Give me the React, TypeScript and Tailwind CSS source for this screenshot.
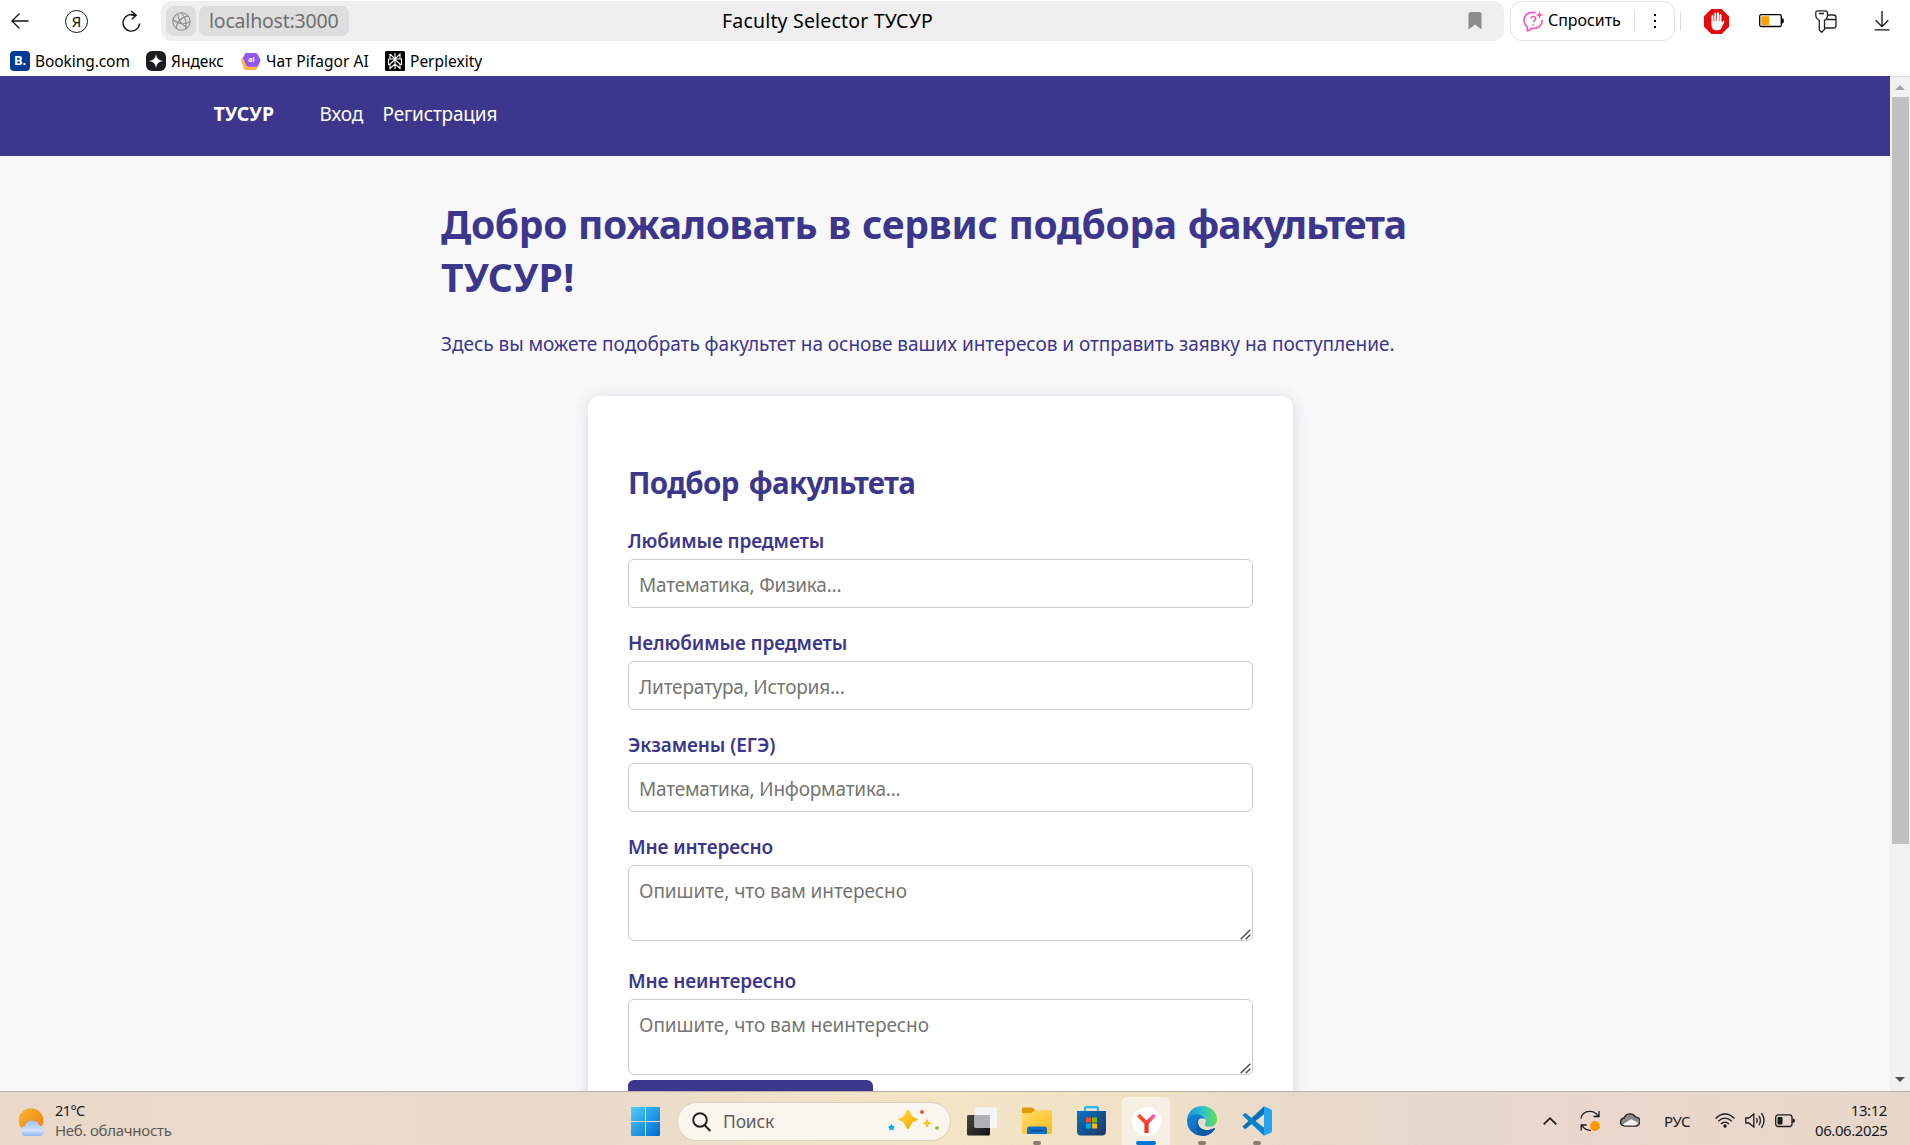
import type { ReactNode } from 'react';

function BackIcon() {
  return (
    <svg width="18" height="18" viewBox="0 0 18 18" fill="none" stroke="#111" strokeWidth="1.3">
      <path d="M17.5 9H1M8.5 1.5 1 9l7.5 7.5" />
    </svg>
  );
}

function YaIcon() {
  return (
    <span className="flex h-[23px] w-[23px] items-center justify-center rounded-full border-[1.5px] border-[#111] font-['Noto_Sans',sans-serif] text-[15px] leading-none text-[#111]">
      Я
    </span>
  );
}

function ReloadIcon() {
  return (
    <svg width="19" height="23" viewBox="0 0 19 23" fill="none" stroke="#111" strokeWidth="1.4">
      <path d="M17.6 13.5A8.3 8.3 0 1 1 13.5 5.6" />
      <path d="M9 5h5.500M9.200 1l5 4.200-4.400 4" />
    </svg>
  );
}

function GlobeIcon() {
  return (
    <svg width="19" height="19" viewBox="0 0 19 19" fill="none" stroke="#8f8f8f" strokeWidth="1.1">
      <circle cx="9.500" cy="9.500" r="8.700" />
      <path d="M5.500 1.800C6.500 8 10.500 13.500 15.500 15.800M16.200 4C10 4.500 4.500 10 4.300 16.500M.9 7.500c5 4.500 11.500 5.200 17.200 2.300M9 .9c4.500 4 6 9.500 4.500 16.400" />
    </svg>
  );
}

function BookmarkIcon() {
  return (
    <svg width="14" height="18" viewBox="0 0 14 18">
      <path d="M.5 2.500Q.5 0 3 0h8q2.500 0 2.500 2.500V17.500L7 12.500.5 17.500z" fill="#8c8c8c" />
    </svg>
  );
}

function AskIcon() {
  return (
    <svg width="21" height="21" viewBox="0 0 21 21" fill="none">
      <defs>
        <linearGradient id="ask" x1="0" y1="0" x2="1" y2="0">
          <stop offset="0" stopColor="#e65be0" />
          <stop offset="1" stopColor="#ff5c93" />
        </linearGradient>
      </defs>
      <path d="M12 1.600C5.500.2 1 4.300 1 9.300c0 3 1.300 5.300 3.400 6.800L4.300 20c2-.4 3.500-1.500 4.600-2.600 5.500.5 10-2.400 10.300-7.700" stroke="url(#ask)" strokeWidth="1.700" strokeLinecap="round" strokeLinejoin="round" />
      <path d="M8 7.600c0-3 5-2.700 4.700.2-.2 1.700-2.300 1.700-2.300 3.600M10.300 13v1.500" stroke="url(#ask)" strokeWidth="1.600" />
      <path d="M16.500 0l1 3 3.200 1-3.200 1-1 3-1-3-3-1 3-1z" fill="#ff5c93" />
    </svg>
  );
}

function AdblockIcon() {
  return (
    <svg width="25" height="25" viewBox="0 0 25 25">
      <path d="M7.300 0h10.400L25 7.300v10.400L17.700 25H7.300L0 17.700V7.300z" fill="#e60b0b" />
      <g stroke="#fff" strokeWidth="2" strokeLinecap="round">
        <path d="M8.500 7v7M11.300 4.700v9M14 4.300v9M16.500 6.300v8" />
      </g>
      <path d="M7.500 12h10v2.300l1.300-2.100c.7-1 2-.4 1.500.7l-3 6.300c-.8 1.500-2 2-4.300 2-3.500 0-5.500-1.500-5.500-5.500z" fill="#fff" />
    </svg>
  );
}

function BrowserBatteryIcon() {
  return (
    <svg width="25" height="14" viewBox="0 0 25 14">
      <rect x=".7" y=".7" width="21.600" height="11.800" rx="1.500" fill="none" stroke="#000" strokeWidth="1.300" />
      <rect x="2.200" y="2.200" width="8" height="9" rx="1" fill="#ffa000" />
      <path d="M22.500 3.700q2.500.3 2.500 3t-2.500 3z" fill="#000" />
    </svg>
  );
}

function KeysIcon() {
  return (
    <svg width="22" height="23" viewBox="0 0 22 23" fill="none" stroke="#222" strokeWidth="1.300">
      <path d="M2.500.8h7.700q2.300 0 2.300 2.400v2.600q0 3.400-3 4.500v9.200L6.700 22.300 4.300 20v-9.700Q.8 8.800.8 5.300V2.800Q.8.800 2.500.8z" />
      <path d="M4 3.500h5M13 5h5.500q2.500 0 2.500 2.500v8q0 2.500-2.500 2.500h-9M11.500 9.500H21" />
    </svg>
  );
}

function DownloadIcon() {
  return (
    <svg width="16" height="20" viewBox="0 0 16 20" fill="none" stroke="#111" strokeWidth="1.300">
      <path d="M8 0v15.500M1.700 9.300 8 15.600l6.300-6.300M.5 18.800h15" />
    </svg>
  );
}

function Toolbar() {
  return (
    <div className="flex h-[41px] items-start pt-px pl-[11px]">
      <div className="flex h-[40px] items-center">
        <BackIcon />
        <div className="ml-[36px]"><YaIcon /></div>
        <div className="ml-[34px] mr-[20px]"><ReloadIcon /></div>
      </div>
      <div className="flex h-10 w-[1343px] shrink-0 items-center rounded-[10px] bg-[#efefef]">
        <div className="ml-[5px] flex h-[30px] w-[30px] items-center justify-center rounded-[7px] bg-[#dedede]">
          <GlobeIcon />
        </div>
        <div className="ml-[3px] flex h-[30px] w-[150px] items-center rounded-[7px] bg-[#dedede] pl-[10px] text-[19.5px] tracking-[-0.2px] text-[#6f6f6f]">
          localhost:3000
        </div>
        <div className="ml-[373px] flex-1 text-[19.5px] leading-[30px] tracking-[0.18px] text-black">Faculty Selector ТУСУР</div>
        <div className="mr-[22px]"><BookmarkIcon /></div>
      </div>
      <div className="ml-[6px] flex h-10 w-[165px] shrink-0 items-center rounded-[12px] border border-[#e3e3e3]">
        <div className="ml-3"><AskIcon /></div>
        <span className="ml-[4px] w-[86px] pb-px text-[16px] leading-[29px] tracking-[-0.05px] text-black">Спросить</span>
        <span className="h-[22px] w-px bg-[#dedede]" />
        <span className="ml-[19px] flex flex-col gap-1">
          <i className="h-[2px] w-[2px] bg-black" />
          <i className="h-[2px] w-[2px] bg-black" />
          <i className="h-[2px] w-[2px] bg-black" />
        </span>
      </div>
      <div className="flex h-10 items-center">
        <span className="ml-[5px] h-[20px] w-px bg-[#dedede]" />
        <div className="ml-[23px]"><AdblockIcon /></div>
        <div className="ml-[30px]"><BrowserBatteryIcon /></div>
        <div className="ml-[31px]"><KeysIcon /></div>
        <div className="ml-[37px]"><DownloadIcon /></div>
      </div>
    </div>
  );
}

function Bookmark({ icon, children, className }: { icon: ReactNode; children: ReactNode; className: string }) {
  return (
    <div className={`flex shrink-0 items-center gap-[5px] ${className}`}>
      {icon}
      <span className="whitespace-nowrap text-[15.5px] leading-5 text-black">{children}</span>
    </div>
  );
}

function Bookmarks() {
  return (
    <div className="flex h-[35px] items-center pt-[5px] pl-[10px]">
      <Bookmark
        className="w-[136px] tracking-[-0.08px]"
        icon={<span className="flex h-5 w-5 items-center justify-center rounded-[4px] bg-[#003b95] text-[13px] font-bold text-white">B.</span>}
      >
        Booking.com
      </Bookmark>
      <Bookmark
        className="w-[95px]"
        icon={
          <svg width="20" height="20" viewBox="0 0 20 20">
            <rect width="20" height="20" rx="6" fill="#1d1d1f" />
            <path d="M10 3q.6 6.400 7 7-6.400.6-7 7-.6-6.400-7-7 6.400-.6 7-7z" fill="#fff" />
          </svg>
        }
      >
        Яндекс
      </Bookmark>
      <Bookmark
        className="w-[144px] tracking-[0.05px]"
        icon={
          <svg width="20" height="18" viewBox="0 0 20 18">
            <path d="M2 4.500 0 8l2.300 7.500Q3 18 5 18h9q1.300 0 2-1.500l1-2.500z" fill="#ffb54d" />
            <path d="M4.500 1h10Q16.300 1 17 2.700l2.300 4.800q.4 1-.1 2l-1.900 4q-.5 1.200-2 1.200H7.700q-1.700 0-2.400-1.500L2 6z" fill="#9059ee" />
            <text x="7.300" y="10.300" fontSize="7" fontWeight="700" fill="#fff">ai</text>
          </svg>
        }
      >
        Чат Pifagor AI
      </Bookmark>
      <Bookmark
        className=""
        icon={
          <svg width="20" height="20" viewBox="0 0 20 20">
            <rect width="20" height="20" rx="1.500" fill="#000" />
            <path d="M10 2v16M5 3l5 5 5-5v5M5 3v5M3.500 8h13v5.500H15M3.500 8v5.500H5M10 8.500l-5 4.500v4.500l5-4.500 5 4.500V13z" fill="none" stroke="#fff" strokeWidth="1.100" />
          </svg>
        }
      >
        Perplexity
      </Bookmark>
    </div>
  );
}

const fieldClass =
  'block w-full rounded-[6px] border border-[#ccc] bg-white px-[10px] text-[19px] leading-[28px] text-black outline-none placeholder:text-[#757575]';

function Field({ label, placeholder, area }: { label: string; placeholder: string; area?: boolean }) {
  return (
    <label className="block">
      <span className="mb-1 block text-[19px] leading-[28px] font-semibold tracking-[-0.1px] text-[#3c378c]">{label}</span>
      {area ? (
        <span className="relative mb-[26px] block">
          <textarea className={`${fieldClass} h-[76px] resize-none pt-[11px] tracking-[-0.06px]`} placeholder={placeholder} />
          <svg className="absolute right-[2px] bottom-[1px]" width="11" height="11" viewBox="0 0 11 11" stroke="#505050" strokeWidth="1.500">
            <path d="M.7 10.300 10.300.7M5.700 10.300l4.600-4.600" />
          </svg>
        </span>
      ) : (
        <input className={`${fieldClass} mb-[21px] h-[49px] pt-[3px] tracking-[-0.2px]`} placeholder={placeholder} />
      )}
    </label>
  );
}

function Page() {
  return (
    <div className="flex min-h-0 flex-1">
      <div className="flex w-[1890px] flex-col overflow-hidden bg-[#f8f8f8] text-[#3c378c]">
        <nav className="flex h-20 shrink-0 bg-[#3c378c] pt-[23px] pl-[213.500px] text-[19px] leading-[30px] text-white">
          <b className="w-[106px] text-[19.5px] tracking-[0.05px]">ТУСУР</b>
          <span className="w-[63px] tracking-[-0.1px]">Вход</span>
          <span className="tracking-[-0.17px]">Регистрация</span>
        </nav>
        <main className="mx-auto w-[1010px] shrink-0 pt-[41px]">
          <h1 className="pl-px text-[39px] leading-[53px] font-bold tracking-[-0.34px] [word-spacing:1.2px]">
            Добро пожаловать в сервис подбора <span className="tracking-[-1.05px]">факультета</span>{' '}
            <span className="tracking-[0.3px]">ТУСУР!</span>
          </h1>
          <p className="mt-[26px] pl-px text-[19px] leading-[30px] tracking-[-0.03px] whitespace-nowrap">
            Здесь вы можете подобрать факультет на основе ваших интересов и отправить заявку на поступление.
          </p>
          <section className="mt-[37px] ml-[148px] h-[900px] w-[705px] rounded-[12px] bg-white px-10 pt-[67px] shadow-[0_2px_16px_rgba(61,54,139,0.16)]">
            <h2 className="mb-[24px] text-[29.5px] leading-[40px] font-bold tracking-[-0.66px] [word-spacing:3px]">Подбор факультета</h2>
            <Field label="Любимые предметы" placeholder="Математика, Физика..." />
            <Field label="Нелюбимые предметы" placeholder="Литература, История..." />
            <Field label="Экзамены (ЕГЭ)" placeholder="Математика, Информатика..." />
            <Field label="Мне интересно" placeholder="Опишите, что вам интересно" area />
            <Field label="Мне неинтересно" placeholder="Опишите, что вам неинтересно" area />
            <button aria-label="Подобрать" className="-mt-[21px] block h-[50px] w-[245px] rounded-[6px] bg-[#3c378c]" />
          </section>
        </main>
      </div>
      <div className="flex w-5 flex-col items-center border-t border-[#dcdcdc] bg-[#f1f1f1]">
        <svg className="mt-2 shrink-0" width="10" height="5" viewBox="0 0 10 5"><path d="M0 5 5 0l5 5z" fill="#a3a3a3" /></svg>
        <div className="mt-[7px] ml-px h-[747px] w-[17px] bg-[#c1c1c1]" />
        <svg className="mt-auto mb-[9px] shrink-0" width="10" height="5" viewBox="0 0 10 5"><path d="m0 0 5 5 5-5z" fill="#505050" /></svg>
      </div>
    </div>
  );
}

function WeatherIcon() {
  return (
    <svg width="28" height="28" viewBox="0 0 28 28">
      <defs>
        <linearGradient id="sun" x1="0" y1="0" x2="1" y2="1">
          <stop offset="0" stopColor="#f5b92e" />
          <stop offset="1" stopColor="#f27a12" />
        </linearGradient>
        <linearGradient id="cloud" x1="0" y1="0" x2="0" y2="1">
          <stop offset="0" stopColor="#9fc0f3" />
          <stop offset=".65" stopColor="#d3e2fb" />
          <stop offset="1" stopColor="#8fb0ee" />
        </linearGradient>
      </defs>
      <circle cx="13" cy="12.500" r="12.300" fill="url(#sun)" />
      <path d="M7.500 28a5 5 0 0 1-.6-9.900 7.500 7.500 0 0 1 14.200-.8A5.500 5.500 0 0 1 22.500 28z" fill="url(#cloud)" />
    </svg>
  );
}

function WindowsIcon() {
  return (
    <svg width="29" height="29" viewBox="0 0 29 29">
      <defs>
        <linearGradient id="win" x1="0" y1="0" x2="1" y2="1">
          <stop offset="0" stopColor="#4fd0fa" />
          <stop offset="1" stopColor="#0069ce" />
        </linearGradient>
      </defs>
      <path d="M1 0h13v14H0V1q0-1 1-1zM15 0h13q1 0 1 1v13H15zM0 15h14v14H1q-1 0-1-1zM15 15h14v13q0 1-1 1H15z" fill="url(#win)" />
    </svg>
  );
}

function SparklesIcon() {
  return (
    <svg width="52" height="24" viewBox="0 0 52 24">
      <defs>
        <linearGradient id="spark" x1="0" y1="0" x2="1" y2="1">
          <stop offset="0" stopColor="#ffdc3d" />
          <stop offset="1" stopColor="#f0a500" />
        </linearGradient>
      </defs>
      <path d="M20 0q1.500 0 2 1.800 1.300 5.200 6.300 6.500 3 1.100 0 2.200-5 1.300-6.300 6.500-.5 2-2 2t-2-2q-1.300-5.200-6.300-6.500-3-1.100 0-2.200 5-1.300 6.300-6.500Q18.500 0 20 0z" fill="url(#spark)" />
      <path d="m39 8.500 1.400 3.300 3.600 1.400-3.600 1.400L39 18l-1.400-3.400-3.600-1.400 3.600-1.400z" fill="url(#spark)" />
      <path d="m3.500 14 1.100 1.800 2.200.4-1.300 1.700.3 2.300-2.100-.8-2 1.300-.1-2.300L0 16.700l2.100-.6z" fill="#0ca8ee" />
      <circle cx="34" cy="2" r="2" fill="#ea5a32" />
      <circle cx="49" cy="18" r="1.900" fill="#8bc83f" />
    </svg>
  );
}

function TaskViewIcon() {
  return (
    <svg width="30" height="29" viewBox="0 0 30 29">
      <defs>
        <linearGradient id="tv" x1="0" y1="0" x2="1" y2="1">
          <stop offset="0" stopColor="#484848" />
          <stop offset="1" stopColor="#111" />
        </linearGradient>
      </defs>
      <rect y="8" width="23" height="20.500" rx="1.500" fill="url(#tv)" />
      <rect x="7.500" y=".5" width="22.500" height="20.500" rx="1.500" fill="#f5f5f8" />
      <path d="M7.500 8H22q1 0 1 1v12H9q-1.500 0-1.500-1.500z" fill="#b1b1b3" />
    </svg>
  );
}

function ExplorerIcon() {
  return (
    <svg width="30" height="28" viewBox="0 0 30 28">
      <defs>
        <linearGradient id="fold" x1="0" y1="0" x2="1" y2="1">
          <stop offset="0" stopColor="#ffdc6b" />
          <stop offset="1" stopColor="#fcbb1c" />
        </linearGradient>
      </defs>
      <path d="M0 2Q0 .5 1.500.5h8.200q1 0 1.700.8L14 4v5H0z" fill="#dd9b05" />
      <path d="M0 6h9.500l3-2.700H28.500q1.500 0 1.500 1.500V25q0 2-2 2H2q-2 0-2-2z" fill="url(#fold)" />
      <path d="M5 27v-5q0-2.500 2.500-2.500h15Q25 19.500 25 22v5z" fill="#0f6fc5" />
      <path d="M9 23.500h12" stroke="#07498f" strokeWidth="1.300" />
    </svg>
  );
}

function StoreIcon() {
  return (
    <svg width="29" height="30" viewBox="0 0 29 30">
      <defs>
        <linearGradient id="store" x1="0" y1="0" x2="1" y2="1">
          <stop offset="0" stopColor="#0873c4" />
          <stop offset="1" stopColor="#213461" />
        </linearGradient>
      </defs>
      <path d="M8 7V2.500Q8 1.200 9.300 1.200h10.400Q21 1.200 21 2.500V7" fill="none" stroke="#22b7ee" strokeWidth="2.200" />
      <path d="M0 5h29v20.500q0 4-4 4H4q-4 0-4-4z" fill="url(#store)" />
      <path d="M9 11.500h5v5H9z" fill="#f25022" />
      <path d="M15 11.500h5v5h-5z" fill="#7fba00" />
      <path d="M9 17.500h5v5H9z" fill="#00a4ef" />
      <path d="M15 17.500h5v5h-5z" fill="#ffb900" />
    </svg>
  );
}

function YandexBrowserIcon() {
  return (
    <svg width="29" height="29" viewBox="0 0 29 29">
      <defs>
        <linearGradient id="yb" x1="0" y1="0" x2="1" y2="0">
          <stop offset="0" stopColor="#fb5a1f" />
          <stop offset=".55" stopColor="#f4402a" />
          <stop offset="1" stopColor="#f765dc" />
        </linearGradient>
      </defs>
      <circle cx="14.500" cy="14.500" r="14.500" fill="#fff" />
      <path d="m6.300 8 8.200 8.200L22.700 8M14.500 15v11" fill="none" stroke="url(#yb)" strokeWidth="3.800" />
      <path d="M14.500 16v10" stroke="#f2391f" strokeWidth="3.800" />
    </svg>
  );
}

function EdgeIcon() {
  return (
    <svg width="30" height="30" viewBox="0 0 30 30">
      <defs>
        <linearGradient id="edgeTop" x1="0" y1=".5" x2="1" y2=".5">
          <stop offset="0" stopColor="#1390d8" />
          <stop offset=".5" stopColor="#2cc0d2" />
          <stop offset="1" stopColor="#66e04e" />
        </linearGradient>
        <linearGradient id="edgeLow" x1="0" y1="0" x2="1" y2="1">
          <stop offset="0" stopColor="#1688dc" />
          <stop offset="1" stopColor="#0b4fa5" />
        </linearGradient>
      </defs>
      <path d="M0 14.500C.3 6 7 0 15 0c9 0 15 6.500 15 13 0 5-3.500 7.700-7.500 7.700-4.700 0-5.500-1.600-4.300-3.200 2-2.600 0-7.500-5.700-7.500C7 10 1.500 12 0 14.500z" fill="url(#edgeTop)" />
      <path d="M0 14.500C1 9 7 7.500 11.500 8.600c3 .7 5.500 2.500 6.700 4.400-5-2.500-7.700 1-7.200 4.500.7 5.500 8.500 9 16.300 4.500.5-.2.900.2.600.7C25 27.500 20.500 30 15.500 30 6 30-.3 22.500 0 14.500z" fill="url(#edgeLow)" />
      <path d="M11 17.500c.7 5.500 8.500 9 16.300 4.500.5-.2.900.2.600.7-2.900 4.800-8 7.300-12.500 7.300C9 28 7.500 20 11.500 14.500c-.5 1-.6 2-.5 3z" fill="#0c59a4" />
    </svg>
  );
}

function VsCodeIcon() {
  return (
    <svg width="30" height="30" viewBox="0 0 30 30">
      <path d="M.6 20.500 22 .3v8L3.800 22.800q-.6.500-1.200 0l-2-1.700z" fill="#0a72b8" />
      <path d="M.6 9.500 22 29.700v-8L3.800 7.200q-.6-.5-1.200 0l-2 1.700z" fill="#0d83cf" />
      <path d="M22 .2 28.800 3.300Q30 3.900 30 5.200v19.600q0 1.300-1.200 1.900L22 29.800z" fill="#25a3f3" />
    </svg>
  );
}

function TaskItem({ children, className, mark }: { children: ReactNode; className?: string; mark?: 'dot' | 'active' }) {
  return (
    <div className={`flex h-12 w-12 shrink-0 flex-col items-center ${mark === 'active' ? 'rounded-t-[5px] bg-[#f7efe3]' : ''} ${className ?? ''}`}>
      <div className="flex h-11 items-center justify-center pt-[4px]">{children}</div>
      {mark === 'dot' && <span className="h-1 w-2 rounded-full bg-[#8a7e70]" />}
      {mark === 'active' && <span className="h-1 w-5 rounded-full bg-[#0078d4]" />}
    </div>
  );
}

function TrayIcons() {
  return (
    <>
      <svg className="mt-[25px]" width="14" height="8" viewBox="0 0 14 8" fill="none" stroke="#1b1b1b" strokeWidth="1.700"><path d="M.7 7.300 7 1.200l6.300 6.100" /></svg>
      <svg className="mt-[18px] ml-[23px]" width="21" height="22" viewBox="0 0 21 22" fill="none" stroke="#1b1b1b" strokeWidth="1.300">
        <path d="M.8 8.500C2 3.500 5.500 1.300 9.500 1.300c4.300 0 7 2 8.700 4.700M19 1v5.500h-5.500M11 20.300c-4 .3-7-1.600-9-4.600M1.200 20.500V15h5.500" />
        <circle cx="15" cy="16" r="5" fill="#fe9900" stroke="none" />
      </svg>
      <svg className="mt-[20px] ml-[19px]" width="20" height="15" viewBox="0 0 20 15">
        <path d="M4.800 14a4 4 0 0 1-.7-8A6.300 6.300 0 0 1 15.500 5a4.400 4.400 0 0 1 0 9z" fill="#8b8885" stroke="#222" strokeWidth="1.300" />
        <path d="M2.500 12.500 11 7.300l6.500 3q.8 2.300-2 3.100H5q-1.500 0-2.500-.9z" fill="#f2efec" />
      </svg>
      <span className="mt-[17px] ml-[24px] w-[27px] text-[15px] leading-6 tracking-[-0.2px] text-[#1b1b1b]">РУС</span>
      <svg className="mt-[21px] ml-[24px]" width="20" height="15" viewBox="0 0 20 15" fill="none" stroke="#1b1b1b" strokeWidth="1.300">
        <path d="M.5 5.500Q5 1 10 1t9.500 4.500M3.300 8.300Q6.300 5.200 10 5.200t6.700 3.100M6 11q1.800-1.800 4-1.800t4 1.800" />
        <circle cx="10" cy="13" r="1.700" fill="#1b1b1b" stroke="none" />
      </svg>
      <svg className="mt-[20px] ml-[10px]" width="21" height="17" viewBox="0 0 21 17" fill="none" stroke="#1b1b1b" strokeWidth="1.300">
        <path d="M.8 6v5h3l5 4V2l-5 4zM11.500 6q1.300 2.500 0 5M14 3.800q2.800 4.700 0 9.400M16.500 1.200q5 7.300 0 14.600" />
      </svg>
      <svg className="mt-[22px] ml-[9px]" width="20" height="14" viewBox="0 0 20 14">
        <rect x=".7" y=".9" width="16.300" height="11.600" rx="2.500" fill="none" stroke="#1b1b1b" strokeWidth="1.300" />
        <rect x="2.500" y="3" width="5" height="7.500" rx="1" fill="#1b1b1b" />
        <path d="M17.500 4.500q2.500 0 2.500 2.200t-2.500 2.300z" fill="#1b1b1b" />
      </svg>
    </>
  );
}

function Taskbar() {
  return (
    <div className="flex h-[54px] shrink-0 border-t border-[#b8aea6] bg-[linear-gradient(90deg,#e9d9cb_0%,#ead9cc_18%,#e9d9ca_32%,#f0e2c8_40%,#f3e5c5_50%,#f0e1c7_60%,#e8d9cb_68%,#e6d8ce_76%,#ead7cd_85%,#e7d8cb_100%)]">
      <div className="flex w-[631px] shrink-0 pl-[18px]">
        <div className="mt-4"><WeatherIcon /></div>
        <div className="mt-2 ml-[9px] text-[15px] leading-5 tracking-[-0.28px]">
          <div className="text-[14.500px] tracking-[-0.6px] text-[#1b1b1b]">21°C</div>
          <div className="text-[#5d5853]">Неб. облачность</div>
        </div>
      </div>
      <div className="flex w-[660px] shrink-0">
        <div className="mt-[15px]"><WindowsIcon /></div>
        <div className="mt-[10px] ml-[17px] flex h-[39px] w-[274px] items-center rounded-full border border-[#ddd0bb] bg-[#faf5ed]">
          <svg className="ml-[14px]" width="19" height="20" viewBox="0 0 19 20" fill="none" stroke="#222" strokeWidth="2">
            <circle cx="8" cy="8" r="6.800" />
            <path d="m12.500 13 5.300 5.500" strokeLinecap="round" />
          </svg>
          <span className="ml-[12px] flex-1 pb-px text-[17.500px] leading-[29px] tracking-[-0.2px] text-[#5c5c5c]">Поиск</span>
          <div className="mr-[10px]"><SparklesIcon /></div>
        </div>
        <div className="mt-[15px] ml-4"><TaskViewIcon /></div>
        <TaskItem className="mt-[5px] ml-[16px]" mark="dot"><ExplorerIcon /></TaskItem>
        <TaskItem className="mt-[5px] ml-[6px]"><StoreIcon /></TaskItem>
        <TaskItem className="mt-[5px] ml-[7px]" mark="active"><YandexBrowserIcon /></TaskItem>
        <TaskItem className="mt-[5px] ml-[8px]" mark="dot"><EdgeIcon /></TaskItem>
        <TaskItem className="mt-[5px] ml-[7px]" mark="dot"><VsCodeIcon /></TaskItem>
      </div>
      <div className="ml-auto flex items-start pr-[23px]">
        <TrayIcons />
        <div className="mt-2 ml-[20px] w-[72px] text-right text-[15px] leading-5 tracking-[-0.42px] text-[#1b1b1b]">
          <div>13:12</div>
          <div>06.06.2025</div>
        </div>
      </div>
    </div>
  );
}

export default function App() {
  return (
    <div className="flex h-[1145px] w-[1910px] flex-col overflow-hidden bg-white font-['Noto_Sans',sans-serif]">
      <Toolbar />
      <Bookmarks />
      <Page />
      <Taskbar />
    </div>
  );
}
